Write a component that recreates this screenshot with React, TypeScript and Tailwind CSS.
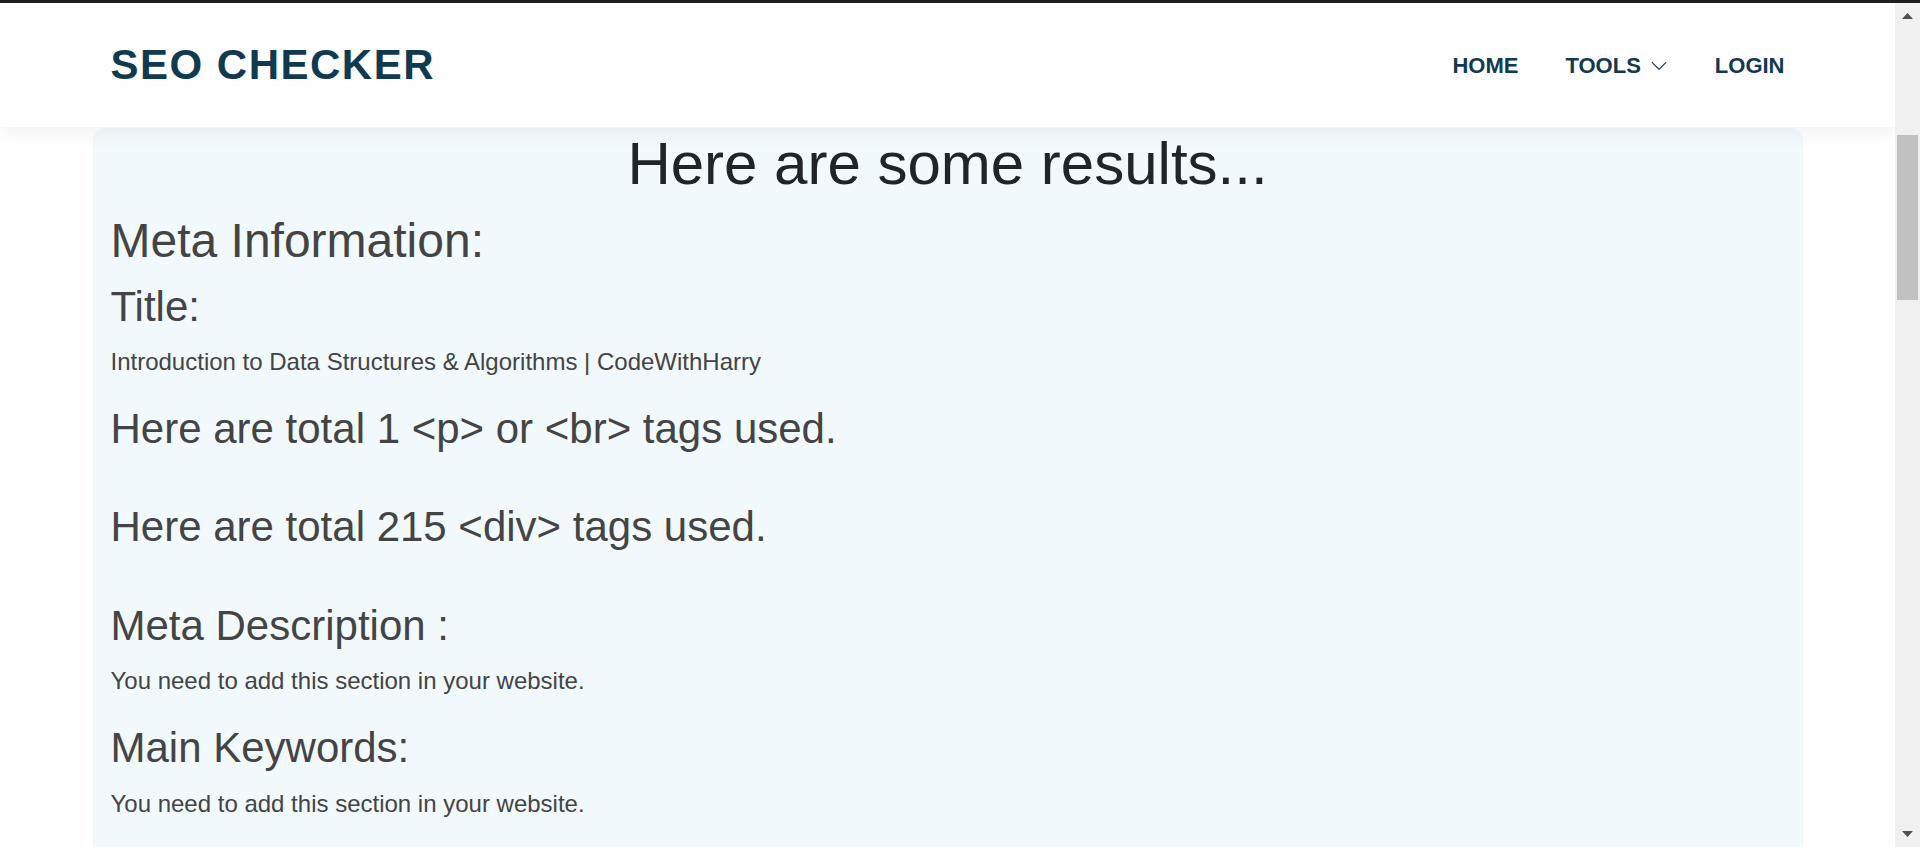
import React from "react";

function ChevronDown() {
  return (
    <svg width="18" height="18" viewBox="0 0 16 16" fill="currentColor" className="mt-[2px]">
      <path
        fillRule="evenodd"
        d="M1.646 4.646a.5.5 0 0 1 .708 0L8 10.293l5.646-5.647a.5.5 0 0 1 .708.708l-6 6a.5.5 0 0 1-.708 0l-6-6a.5.5 0 0 1 0-.708z"
      />
    </svg>
  );
}

function Scrollbar() {
  return (
    <div className="w-[25px] shrink-0 bg-[#f0f0f0] flex flex-col">
      <div className="h-[25px] flex items-center justify-center">
        <svg width="11" height="6" viewBox="0 0 11 6">
          <polygon points="5.5,0 11,6 0,6" fill="#505050" />
        </svg>
      </div>
      {/* thumb */}
      <div className="mt-[107px] mx-auto w-[21px] h-[165px] bg-[#c1c1c1]" />
      <div className="flex-1" />
      <div className="h-[16px] flex items-start justify-center">
        <svg width="11" height="6" viewBox="0 0 11 6">
          <polygon points="0,0 11,0 5.5,6" fill="#505050" />
        </svg>
      </div>
    </div>
  );
}

function Header() {
  return (
    <header className="relative z-10 h-[124px] bg-white shadow-[0_2px_22px_rgba(0,0,0,0.07)]">
      <div className="mx-auto w-[1710px] h-full px-[18px] flex items-center justify-between">
        <a href="#" className="text-[42px] font-bold tracking-[1.5px] text-[#103a4f] leading-none">
          SEO CHECKER
        </a>
        <nav className="flex items-center gap-[47px] text-[22px] font-bold text-[#103a4f]">
          <a href="#">HOME</a>
          <a href="#" className="flex items-center gap-[9px]">
            TOOLS
            <ChevronDown />
          </a>
          <a href="#">LOGIN</a>
        </nav>
      </div>
    </header>
  );
}

export default function App() {
  return (
    <div className="h-[847px] w-full overflow-hidden bg-white flex flex-col font-['Liberation_Sans',Arial,sans-serif]">
      <div className="h-[3px] shrink-0 bg-[#1f1f1f]" />
      <div className="flex flex-1 min-h-0">
        <div className="flex-1 min-w-0 overflow-hidden">
          <Header />
          <main className="pt-px">
            <div className="mx-auto w-[1710px] rounded-[12px] bg-[#f1f9fd] px-[18px] pb-10 text-[24px] leading-[1.5] text-[#444]">
              <h1 className="text-center text-[60px] leading-[1.2] font-normal text-[#212529] mb-[12px]">
                Here are some results...
              </h1>
              <h2 className="text-[48px] leading-[1.2] font-normal mb-[12px]">Meta Information:</h2>
              <h3 className="text-[42px] leading-[1.2] font-normal mb-[12px]">Title:</h3>
              <p className="mb-[24px]">Introduction to Data Structures &amp; Algorithms | CodeWithHarry</p>
              <h3 className="text-[42px] leading-[1.2] font-normal mb-[12px]">
                Here are total 1 &lt;p&gt; or &lt;br&gt; tags used.
              </h3>
              <br />
              <h3 className="text-[42px] leading-[1.2] font-normal mb-[12px]">
                Here are total 215 &lt;div&gt; tags used.
              </h3>
              <br />
              <h3 className="text-[42px] leading-[1.2] font-normal mb-[12px]">Meta Description :</h3>
              <p className="mb-[24px]">You need to add this section in your website.</p>
              <h3 className="text-[42px] leading-[1.2] font-normal mb-[12px]">Main Keywords:</h3>
              <p className="mb-[24px]">You need to add this section in your website.</p>
            </div>
          </main>
        </div>
        <Scrollbar />
      </div>
    </div>
  );
}
